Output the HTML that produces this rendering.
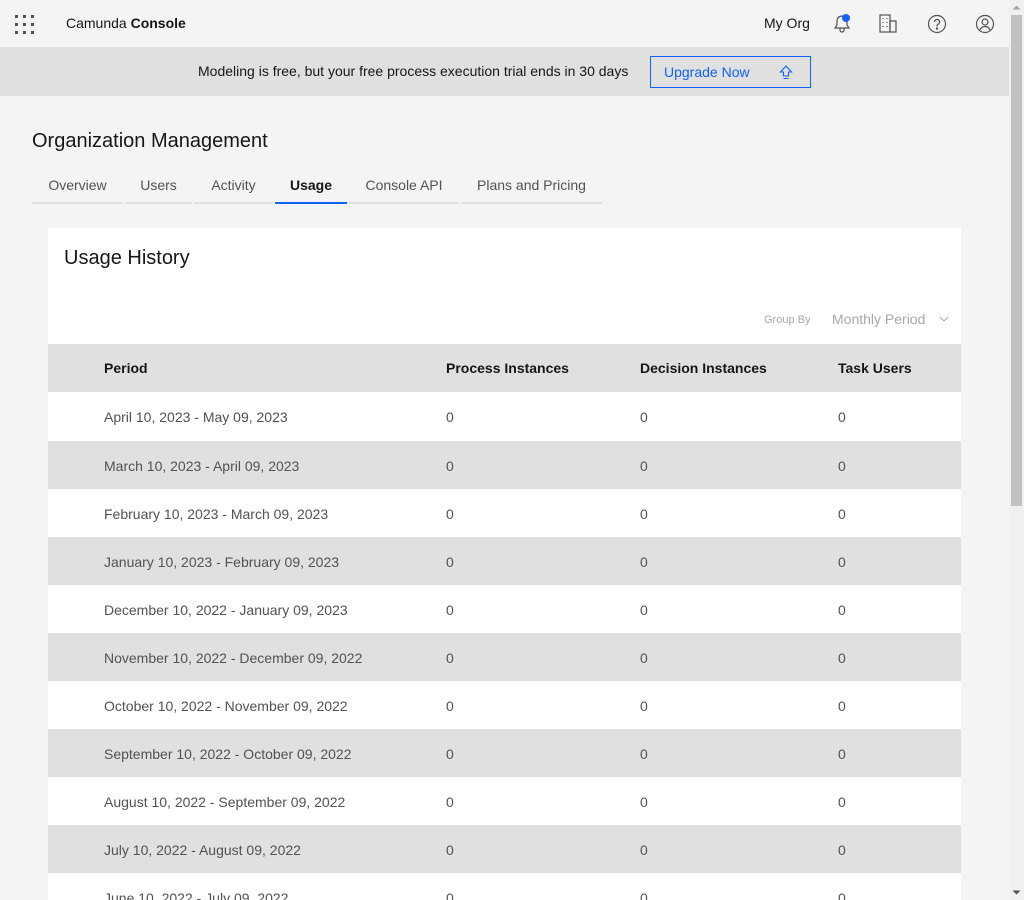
<!DOCTYPE html>
<html style="width:1024px;height:900px;overflow:hidden"><head><style>
*{box-sizing:border-box;margin:0;padding:0}
body{width:1024px;height:900px;overflow:hidden;background:#f4f4f4;font-family:"Liberation Sans",sans-serif;color:#161616;position:relative}
.hdr{position:absolute;left:0;top:0;width:1009px;height:48px;background:#f4f4f4;border-bottom:1px solid #e0e0e0}
.dot{position:absolute;width:3px;height:3px;background:#525252}
.abs{position:absolute;white-space:nowrap}
.banner{position:absolute;left:0;top:48px;width:1009px;height:48px;background:#e0e0e0}
.sb{position:absolute;left:1009px;top:0;width:15px;height:900px;background:#f0f0f0}
.thumb{position:absolute;left:1011px;top:15px;width:11px;height:491px;background:#c1c1c1}
.tab{position:absolute;top:164px;height:40px;border-bottom:2px solid #e0e0e0;font-size:14px;color:#525252;padding-top:13px;text-align:center}
.card{position:absolute;left:48px;top:228px;width:913px;height:672px;background:#fff}
.row{position:absolute;left:48px;width:913px;height:48px;font-size:14px;color:#525252;overflow:hidden}
.row span{position:absolute;top:17px}
</style></head><body>
<div class="hdr">
<div class="dot" style="left:15px;top:15px"></div><div class="dot" style="left:23px;top:15px"></div><div class="dot" style="left:31px;top:15px"></div>
<div class="dot" style="left:15px;top:23px"></div><div class="dot" style="left:23px;top:23px"></div><div class="dot" style="left:31px;top:23px"></div>
<div class="dot" style="left:15px;top:31px"></div><div class="dot" style="left:23px;top:31px"></div><div class="dot" style="left:31px;top:31px"></div>
<div class="abs" style="left:66px;top:15px;font-size:14px">Camunda <b>Console</b></div>
<div class="abs" style="left:764px;top:15px;font-size:14px">My Org</div>
<svg class="abs" style="left:830px;top:12px" width="24" height="24" viewBox="0 0 24 24" fill="none" stroke="#525252" stroke-width="1.2"><path d="M5 16h14l-2-3V9a5 5 0 0 0-10 0v4z M10 16v2a2 2 0 0 0 4 0v-2"/><circle cx="16" cy="6" r="4" fill="#0f62fe" stroke="none"/></svg>
<svg class="abs" style="left:878px;top:13px" width="22" height="22" viewBox="0 0 22 22" fill="none" stroke="#525252" stroke-width="1.2"><rect x="2" y="2" width="10" height="17"/><rect x="12" y="8" width="6" height="11"/><path d="M5 5v1M9 5v1M5 9v1M9 9v1M5 13v1M9 13v1"/></svg>
<svg class="abs" style="left:926px;top:13px" width="22" height="22" viewBox="0 0 22 22" fill="none" stroke="#525252" stroke-width="1.2"><circle cx="11" cy="11" r="8.5"/><path d="M8.5 9a2.5 2.5 0 1 1 3.5 2.3c-.7.3-1 .8-1 1.5v.7"/><circle cx="11" cy="15.6" r=".6" fill="#525252"/></svg>
<svg class="abs" style="left:974px;top:13px" width="22" height="22" viewBox="0 0 22 22" fill="none" stroke="#525252" stroke-width="1.2"><circle cx="11" cy="11" r="8.5"/><circle cx="11" cy="9" r="3"/><path d="M6 17c1-2.5 2.5-3.5 5-3.5s4 1 5 3.5"/></svg>
</div>
<div class="banner">
<div class="abs" style="left:198px;top:15px;font-size:14px;color:#161616">Modeling is free, but your free process execution trial ends in 30 days</div>
<div class="abs" style="left:650px;top:8px;width:161px;height:32px;border:1px solid #0f62fe;font-size:14px;color:#0f62fe;padding:7px 0 0 13px">Upgrade Now
<svg style="position:absolute;left:128px;top:8px" width="14" height="16" viewBox="0 0 14 16" fill="none" stroke="#0f62fe" stroke-width="1.1"><path d="M7 1L1.5 7H4.5v4h5V7h3z M4.5 13.5h5"/></svg></div>
</div>
<div class="abs" style="left:32px;top:130px;font-size:20px">Organization Management</div>
<div class="tab" style="left:32px;width:91px">Overview</div>
<div class="tab" style="left:125px;width:67px">Users</div>
<div class="tab" style="left:194px;width:79px">Activity</div>
<div class="tab" style="left:275px;width:72px;border-bottom-color:#0f62fe;color:#161616;font-weight:bold">Usage</div>
<div class="tab" style="left:349px;width:110px">Console API</div>
<div class="tab" style="left:461px;width:141px">Plans and Pricing</div>
<div class="card"></div>
<div class="abs" style="left:64px;top:247px;font-size:20px">Usage History</div>
<div class="abs" style="left:764px;top:314px;font-size:11px;color:#a8a8a8">Group By</div>
<div class="abs" style="left:832px;top:311px;font-size:14px;color:#a8a8a8">Monthly Period</div>
<svg class="abs" style="left:939px;top:315px" width="10" height="8" viewBox="0 0 10 8" fill="none" stroke="#a8a8a8"><path d="M1 2l4 4 4-4"/></svg>
<div class="row" style="top:344px;background:#e0e0e0;color:#161616;font-weight:bold"><span style="left:56px;top:16px">Period</span><span style="left:398px;top:16px">Process Instances</span><span style="left:592px;top:16px">Decision Instances</span><span style="left:790px;top:16px">Task Users</span></div>
<div class="row" style="top:392px;background:#fff;height:49px"><span style="left:56px">April 10, 2023 - May 09, 2023</span><span style="left:398px">0</span><span style="left:592px">0</span><span style="left:790px">0</span></div>
<div class="row" style="top:441px;background:#e0e0e0"><span style="left:56px">March 10, 2023 - April 09, 2023</span><span style="left:398px">0</span><span style="left:592px">0</span><span style="left:790px">0</span></div>
<div class="row" style="top:489px;background:#fff"><span style="left:56px">February 10, 2023 - March 09, 2023</span><span style="left:398px">0</span><span style="left:592px">0</span><span style="left:790px">0</span></div>
<div class="row" style="top:537px;background:#e0e0e0"><span style="left:56px">January 10, 2023 - February 09, 2023</span><span style="left:398px">0</span><span style="left:592px">0</span><span style="left:790px">0</span></div>
<div class="row" style="top:585px;background:#fff"><span style="left:56px">December 10, 2022 - January 09, 2023</span><span style="left:398px">0</span><span style="left:592px">0</span><span style="left:790px">0</span></div>
<div class="row" style="top:633px;background:#e0e0e0"><span style="left:56px">November 10, 2022 - December 09, 2022</span><span style="left:398px">0</span><span style="left:592px">0</span><span style="left:790px">0</span></div>
<div class="row" style="top:681px;background:#fff"><span style="left:56px">October 10, 2022 - November 09, 2022</span><span style="left:398px">0</span><span style="left:592px">0</span><span style="left:790px">0</span></div>
<div class="row" style="top:729px;background:#e0e0e0"><span style="left:56px">September 10, 2022 - October 09, 2022</span><span style="left:398px">0</span><span style="left:592px">0</span><span style="left:790px">0</span></div>
<div class="row" style="top:777px;background:#fff"><span style="left:56px">August 10, 2022 - September 09, 2022</span><span style="left:398px">0</span><span style="left:592px">0</span><span style="left:790px">0</span></div>
<div class="row" style="top:825px;background:#e0e0e0"><span style="left:56px">July 10, 2022 - August 09, 2022</span><span style="left:398px">0</span><span style="left:592px">0</span><span style="left:790px">0</span></div>
<div class="row" style="top:873px;background:#fff;height:27px"><span style="left:56px">June 10, 2022 - July 09, 2022</span><span style="left:398px">0</span><span style="left:592px">0</span><span style="left:790px">0</span></div>
<div class="sb"></div><div class="thumb"></div>
<svg class="abs" style="left:1011px;top:3px" width="11" height="8"><path d="M1.5 6.5L5.5 2.5 9.5 6.5z" fill="#a3a3a3"/></svg>
<svg class="abs" style="left:1011px;top:889px" width="11" height="8"><path d="M1.5 1.5L5.5 5.5 9.5 1.5z" fill="#505050"/></svg>
</body></html>
